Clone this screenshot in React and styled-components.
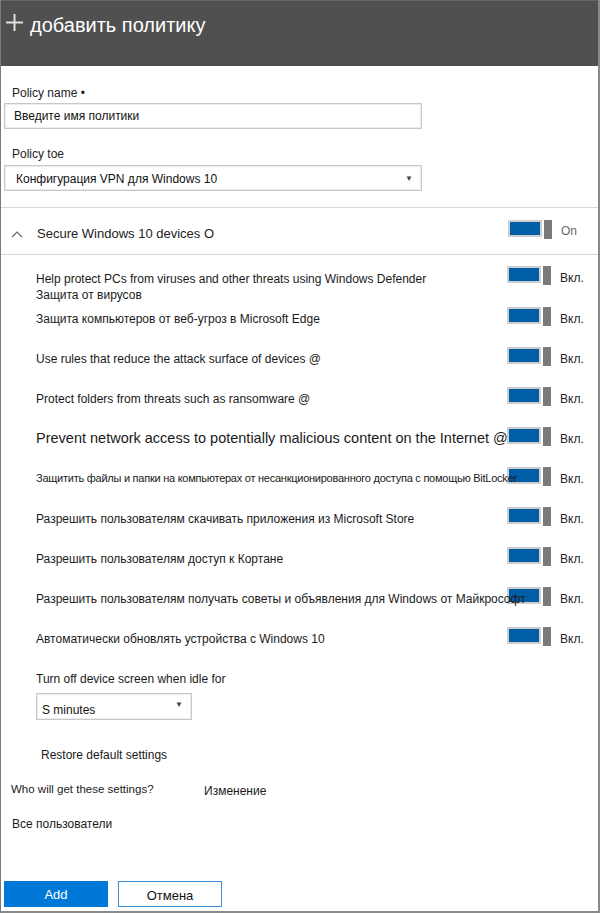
import React from 'react';
import styled, { createGlobalStyle } from 'styled-components';

const GlobalStyle = createGlobalStyle`
  html, body {
    margin: 0;
    padding: 0;
    background: #fff;
  }
  body {
    font-family: "Liberation Sans", Arial, sans-serif;
    color: #222;
  }
`;

const Page = styled.div`
  box-sizing: border-box;
  width: 600px;
  height: 913px;
  border-left: 1px solid #7a7a7a;
  border-right: 2px solid #8a8a8a;
  border-bottom: 2px solid #8a8a8a;
  display: flex;
  flex-direction: column;
  overflow: hidden;
`;

const Header = styled.header`
  height: 66px;
  flex-shrink: 0;
  background: #505050;
  border-top: 1px solid #666;
  box-sizing: border-box;
  display: flex;
  align-items: flex-start;
  gap: 6px;
  padding: 11px 0 0 4px;
  color: #fff;
  font-size: 20px;
  line-height: 26px;

  svg {
    margin-top: 1px;
  }
`;

const Form = styled.div`
  padding: 19px 0 0 3px;
  width: 418px;
`;

const FieldLabel = styled.div`
  font-size: 12px;
  line-height: 16px;
  padding-left: 8px;
  margin-bottom: ${(p) => p.$gap || 2}px;
`;

const TextBox = styled.div`
  box-sizing: border-box;
  height: 26px;
  border: 1px solid #c8c8c8;
  box-shadow: inset 0 0 0 1px #ececec;
  font-size: 12px;
  line-height: 24px;
  padding-left: 9px;
  margin-bottom: ${(p) => p.$after || 0}px;
  color: #111;
`;

const Dropdown = styled(TextBox)`
  display: flex;
  justify-content: space-between;
  align-items: center;
  padding: 1px 8px 0 ${(p) => p.$pad || 10}px;
  width: ${(p) => p.$width || 'auto'};
  height: ${(p) => p.$height || 26}px;
`;

const Arrow = styled.span`
  font-size: 8px;
  color: #444;
  margin-top: ${(p) => p.$lift || 0}px;
`;

const Divider = styled.div`
  height: 1px;
  background: #d8d8d8;
  margin-top: ${(p) => p.$top || 0}px;
`;

const SectionHead = styled.div`
  height: 46px;
  display: flex;
  align-items: flex-start;
  padding: 12px 0 0 10px;
  box-sizing: border-box;
`;

const Chevron = styled.svg`
  margin-top: 10px;
  flex-shrink: 0;
`;

const SectionTitle = styled.div`
  width: 485px;
  flex-shrink: 0;
  font-size: 13px;
  line-height: 16px;
  padding: 6px 0 0 14px;
  box-sizing: border-box;
`;

const List = styled.div`
  padding-top: 11px;
`;

const Row = styled.div`
  display: flex;
  align-items: flex-start;
  height: ${(p) => p.$h || 40}px;
  padding-left: 35px;
`;

const Label = styled.div`
  position: relative;
  z-index: 1;
  width: 471px;
  flex-shrink: 0;
  white-space: nowrap;
  font-size: ${(p) => p.$size || 12}px;
  line-height: ${(p) => p.$lh || 16}px;
  padding-top: ${(p) => p.$top || 4}px;
  letter-spacing: ${(p) => p.$ls || 0}px;
  color: #1a1a1a;
`;

const Toggle = styled.div`
  display: flex;
  align-items: flex-start;
  gap: 2px;
  flex-shrink: 0;
`;

const Track = styled.span`
  box-sizing: border-box;
  width: 34px;
  height: 17px;
  background: #005ea6;
  border: 2px solid #cfcfcf;
`;

const Knob = styled.span`
  width: 8px;
  height: 19px;
  background: #7a7a7a;
`;

const State = styled.span`
  margin-left: 9px;
  font-size: 12px;
  line-height: 16px;
  padding-top: ${(p) => p.$top || 3}px;
  color: ${(p) => (p.$muted ? '#6a6a6a' : '#222')};
`;

const Extra = styled.div`
  padding-left: 35px;
  padding-top: 4px;
`;

const Plain = styled.div`
  font-size: ${(p) => p.$size || 12}px;
  line-height: 16px;
  padding-left: ${(p) => p.$left || 0}px;
  margin-top: ${(p) => p.$top || 0}px;
  color: #1a1a1a;
`;

const WhoRow = styled.div`
  display: flex;
  align-items: flex-start;
  margin-top: 18px;
  padding-left: 10px;
`;

const Spacer = styled.div`
  flex: 1;
`;

const Buttons = styled.div`
  display: flex;
  gap: 10px;
  padding: 0 0 4px 3px;
`;

const Button = styled.button`
  box-sizing: border-box;
  width: 104px;
  height: 26px;
  font-family: inherit;
  font-size: 13px;
  padding: ${(p) => (p.$primary ? '0' : '3px 0 0')};
  background: ${(p) => (p.$primary ? '#0078d7' : '#fff')};
  color: ${(p) => (p.$primary ? '#fff' : '#111')};
  border: 1px solid ${(p) => (p.$primary ? '#0078d7' : '#3c8fdc')};
`;

const settings = [
  {
    lines: ['Help protect PCs from viruses and other threats using Windows Defender', 'Защита от вирусов'],
    h: 41,
    top: 5,
  },
  { lines: ['Защита компьютеров от веб-угроз в Microsoft Edge'] },
  { lines: ['Use rules that reduce the attack surface of devices @'] },
  { lines: ['Protect folders from threats such as ransomware @'] },
  { lines: ['Prevent network access to potentially malicious content on the Internet @'], size: 14.5, lh: 18, top: 2 },
  {
    lines: ['Защитить файлы и папки на компьютерах от несанкционированного доступа с помощью BitLocker'],
    size: 11,
    lh: 14,
    top: 4,
    ls: -0.25,
  },
  { lines: ['Разрешить пользователям скачивать приложения из Microsoft Store'] },
  { lines: ['Разрешить пользователям доступ к Кортане'] },
  { lines: ['Разрешить пользователям получать советы и объявления для Windows от Майкрософт'] },
  { lines: ['Автоматически обновлять устройства с Windows 10'] },
];

function Switch() {
  return (
    <Toggle>
      <Track />
      <Knob />
    </Toggle>
  );
}

function App() {
  return (
    <Page>
      <GlobalStyle />
      <Header>
        <svg width="19" height="19" viewBox="0 0 19 19">
          <path d="M9.5 1v17M1 9.5h17" stroke="#e0e0e0" strokeWidth="2" fill="none" />
        </svg>
        <span>добавить политику</span>
      </Header>

      <Form>
        <FieldLabel>Policy name •</FieldLabel>
        <TextBox $after={17}>Введите имя политики</TextBox>
        <FieldLabel $gap={3}>Policy toe</FieldLabel>
        <Dropdown $pad={11}>
          <span>Конфигурация VPN для Windows 10</span>
          <Arrow>▼</Arrow>
        </Dropdown>
      </Form>

      <Divider $top={16} />

      <SectionHead>
        <Chevron width="12" height="8" viewBox="0 0 12 8">
          <path d="M1 7L6 2l5 5" stroke="#666" strokeWidth="1.2" fill="none" />
        </Chevron>
        <SectionTitle>Secure Windows 10 devices O</SectionTitle>
        <Switch />
        <State $muted $top={3}>On</State>
      </SectionHead>

      <Divider />

      <List>
        {settings.map((s) => (
          <Row key={s.lines[0]} $h={s.h}>
            <Label $size={s.size} $lh={s.lh} $top={s.top} $ls={s.ls}>
              {s.lines.map((l) => (
                <div key={l}>{l}</div>
              ))}
            </Label>
            <Switch />
            <State $top={4}>Вкл.</State>
          </Row>
        ))}
      </List>

      <Extra>
        <Plain>Turn off device screen when idle for</Plain>
        <Dropdown $width="156px" $height={27} $pad={5} style={{ marginTop: 6 }}>
          <span style={{ paddingTop: 5 }}>S minutes</span>
          <Arrow $lift={-4}>▼</Arrow>
        </Dropdown>
        <Plain $left={5} $top={27}>Restore default settings</Plain>
      </Extra>

      <WhoRow>
        <Plain $size={11.5} style={{ width: 193 }}>Who will get these settings?</Plain>
        <Plain $top={2}>Изменение</Plain>
      </WhoRow>
      <Plain $left={11} $top={17}>Все пользователи</Plain>

      <Spacer />

      <Buttons>
        <Button $primary>Add</Button>
        <Button>Отмена</Button>
      </Buttons>
    </Page>
  );
}

export default App;
